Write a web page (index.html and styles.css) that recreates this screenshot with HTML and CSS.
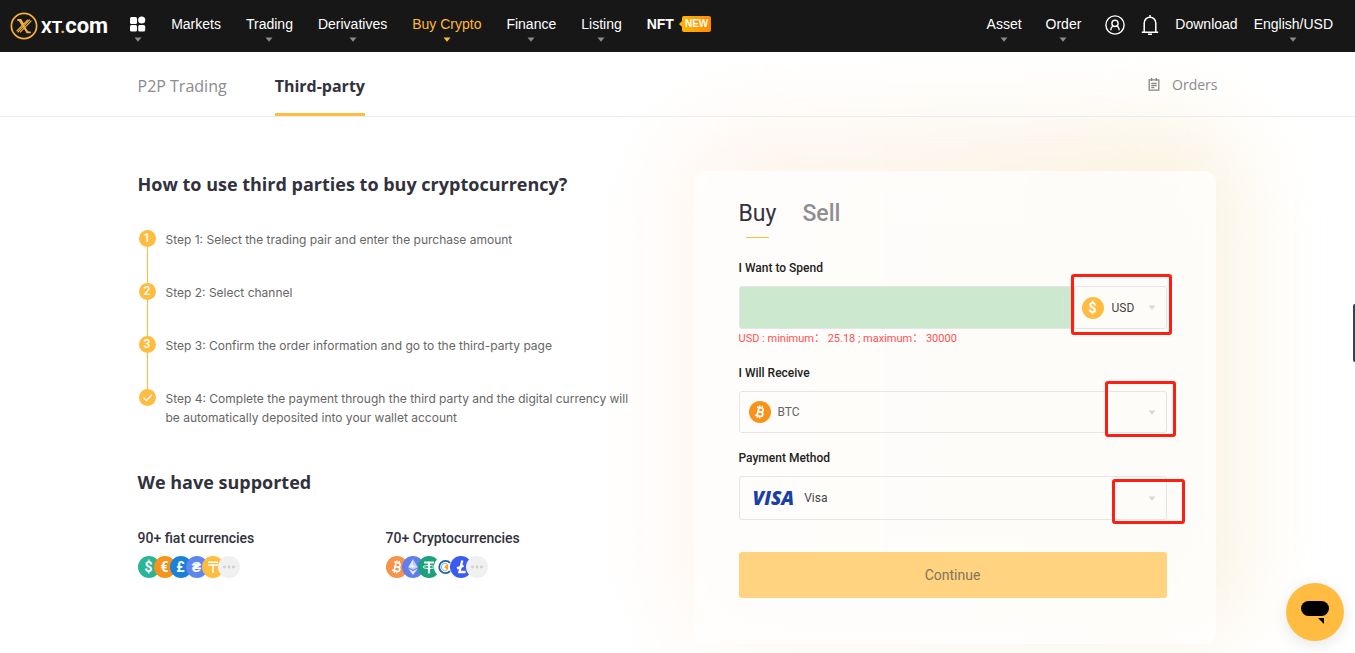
FILE: index.html
```html
<!DOCTYPE html>
<html lang="en">
<head>
<meta charset="utf-8">
<meta name="viewport" content="width=device-width, initial-scale=1">
<title>Buy Crypto | XT.COM</title>
<link rel="stylesheet" href="styles.css">
</head>
<body>
<svg class="defs" aria-hidden="true">
  <symbol id="caret" viewBox="0 0 8 5"><path d="M0.5 0.5h7L4 4.8z" fill="currentColor"/></symbol>
  <symbol id="btc" viewBox="0 0 22 22">
    <g transform="rotate(13 11 11)" fill="none" stroke="#fff" stroke-width="1.7">
      <path d="M9 6.8v8.4M7 6.8h4.6a2 2 0 0 1 0 4.1H9h3.1a2.1 2.1 0 0 1 0 4.3H7"/>
      <path d="M9.6 4.6v2.2M12 4.6v2.2M9.6 15.2v2.2M12 15.2v2.2" stroke-width="1.2"/>
    </g>
  </symbol>
</svg>

<header class="topbar">
  <a class="logo" href="#" aria-label="XT.COM">
    <svg width="28" height="28" viewBox="0 0 28 28" fill="none">
      <circle cx="14" cy="14" r="12.6" stroke="#f5b13a" stroke-width="1.7"/>
      <path d="M7.3 8h3.4l2.6 4.2M20.7 20.3h-3.5l-2.5-4.2" stroke="#f5b13a" stroke-width="1.8"/>
      <path d="M19.8 7.6 7.6 20.4M21.4 8.6 10 20.4M18 7.6 6.6 19.2" stroke="#f5b13a" stroke-width="1.2"/>
      <path d="M9.5 8.5l8.3 12" stroke="#f5b13a" stroke-width="1.8"/>
    </svg>
    <span class="wordmark">XT<i>.</i><b>com</b></span>
  </a>
  <nav class="nav">
    <a class="nav-item apps" href="#" aria-label="Apps">
      <svg width="16" height="16" viewBox="0 0 16 16" fill="#fff"><rect x="0" y="1" width="7" height="7" rx="1.5"/><circle cx="11.7" cy="4" r="3.6"/><rect x="0" y="9" width="7" height="6.5" rx="1.5"/><rect x="8.2" y="9" width="7" height="6.5" rx="1.5"/></svg>
      <svg class="caret"><use href="#caret"/></svg>
    </a>
    <a class="nav-item" href="#">Markets</a>
    <a class="nav-item" href="#">Trading<svg class="caret"><use href="#caret"/></svg></a>
    <a class="nav-item" href="#">Derivatives<svg class="caret"><use href="#caret"/></svg></a>
    <a class="nav-item active" href="#">Buy Crypto<svg class="caret"><use href="#caret"/></svg></a>
    <a class="nav-item" href="#">Finance<svg class="caret"><use href="#caret"/></svg></a>
    <a class="nav-item" href="#">Listing<svg class="caret"><use href="#caret"/></svg></a>
    <a class="nav-item nft" href="#">NFT<span class="new">NEW</span></a>
  </nav>
  <nav class="nav account">
    <a class="nav-item" href="#">Asset<svg class="caret"><use href="#caret"/></svg></a>
    <a class="nav-item" href="#">Order<svg class="caret"><use href="#caret"/></svg></a>
    <button class="icon-button user" aria-label="Account">
      <svg width="20" height="20" viewBox="0 0 20 20" fill="none" stroke="#fff" stroke-width="1.4"><circle cx="10" cy="10" r="9.1"/><circle cx="10" cy="8.4" r="3.1"/><path d="M5.8 15.2c.2-3 1.2-4 3-4.1M14.2 15.2c-.2-3-1.2-4-3-4.1"/></svg>
    </button>
    <button class="icon-button" aria-label="Notifications">
      <svg width="18" height="20" viewBox="0 0 18 20" fill="none" stroke="#fff" stroke-width="1.5"><path d="M3.2 17V8a5.8 5.8 0 0 1 11.6 0v9M.8 17.2h16.4M9 2V0M7 19.2h4"/></svg>
    </button>
    <a class="nav-item" href="#">Download</a>
    <a class="nav-item" href="#">English/USD<svg class="caret"><use href="#caret"/></svg></a>
  </nav>
</header>

<div class="subbar">
  <div class="container subbar-inner">
    <a class="tab" href="#">P2P Trading</a>
    <a class="tab current" href="#">Third-party</a>
    <a class="orders" href="#">
      <svg width="12" height="13" viewBox="0 0 12 13" fill="none" stroke="#858585" stroke-width="1.3"><path d="M1.2 1.8h9.6v10.4H1.2zM3.6 0v3M8.4 0v3M3.3 5.5h5.4M3.3 7.6h5.4M3.3 9.7h3"/></svg>
      Orders
    </a>
  </div>
</div>

<main class="container content">
  <section class="guide">
    <h1>How to use third parties to buy cryptocurrency?</h1>
    <ol class="steps">
      <li><span class="dot">1</span><p>Step 1: Select the trading pair and enter the purchase amount</p></li>
      <li><span class="dot">2</span><p>Step 2: Select channel</p></li>
      <li><span class="dot">3</span><p>Step 3: Confirm the order information and go to the third-party page</p></li>
      <li><span class="dot"><svg width="17" height="17" viewBox="0 0 17 17" fill="none" stroke="#fff" stroke-width="1.3"><path d="M4.5 8.6l3 2.9 5.4-5.7"/></svg></span><p>Step 4: Complete the payment through the third party and the digital currency will<br>be automatically deposited into your wallet account</p></li>
    </ol>
    <h2>We have supported</h2>
    <div class="supported">
      <div>
        <h3>90+ fiat currencies</h3>
        <div class="coins">
          <span class="coin green">$</span><span class="coin orange">€</span><span class="coin blue">£</span><span class="coin sky">₴</span><span class="coin amber"><svg width="22" height="22" viewBox="0 0 22 22" stroke="#fff" stroke-width="1.6"><path d="M6 6.2h10M6 9h10M11 9v8"/></svg></span><span class="coin more"><svg width="22" height="22" viewBox="0 0 22 22" fill="#cfcfcf"><circle cx="6.5" cy="11" r="1.4"/><circle cx="11" cy="11" r="1.4"/><circle cx="15.5" cy="11" r="1.4"/></svg></span>
        </div>
      </div>
      <div>
        <h3>70+ Cryptocurrencies</h3>
        <div class="coins">
          <span class="coin coral"><svg width="22" height="22"><use href="#btc"/></svg></span><span class="coin indigo"><svg width="22" height="22" viewBox="0 0 22 22" fill="#fff"><path d="M11 3v8.6l-4.8-.3z" opacity=".8"/><path d="M11 3l4.8 8.3-4.8.3z" opacity=".6"/><path d="M6.2 12.5L11 15.2l4.8-2.7L11 19z" opacity=".85"/><path d="M6.2 11.3L11 9l4.8 2.3-4.8 2.8z" opacity=".6"/></svg></span><span class="coin tether"><svg width="22" height="22" viewBox="0 0 22 22" fill="none" stroke="#fff"><path d="M6 6.5h10M11 6.5V17.5" stroke-width="2.2"/><ellipse cx="11" cy="11" rx="6" ry="1.5" stroke-width="1"/></svg></span><span class="coin white"><svg width="22" height="22" viewBox="0 0 22 22" fill="none"><path d="M16 6.8a6.2 6.2 0 1 0 0 8.4" stroke="#1c63a8" stroke-width="1.8"/><path d="M14.2 7.6v6.8L10 11z" fill="#f5a623"/><path d="M13 8a3.6 3.6 0 1 0 0 6" stroke="#8bb4dc" stroke-width="1"/></svg></span><span class="coin royal"><svg width="22" height="22" viewBox="0 0 22 22" fill="none" stroke="#fff" stroke-width="2.3"><path d="M12.3 4.5L9.4 16h6.2M7 12.4l6.6-2.6"/></svg></span><span class="coin more"><svg width="22" height="22" viewBox="0 0 22 22" fill="#cfcfcf"><circle cx="6.5" cy="11" r="1.4"/><circle cx="11" cy="11" r="1.4"/><circle cx="15.5" cy="11" r="1.4"/></svg></span>
        </div>
      </div>
    </div>
  </section>

  <form class="card">
    <div class="modes">
      <button type="button" class="mode selected">Buy</button>
      <button type="button" class="mode">Sell</button>
    </div>

    <label class="label" for="spend">I Want to Spend</label>
    <div class="field split">
      <div class="amount"><input id="spend" type="text"></div>
      <div class="currency">
        <span class="token amber">$</span>
        <select aria-label="Currency"><option>USD</option></select>
        <svg class="caret"><use href="#caret"/></svg>
      </div>
      <span class="mark mark-currency"></span>
    </div>
    <p class="error">USD : minimum： 25.18 ; maximum： 30000</p>

    <label class="label" for="receive">I Will Receive</label>
    <div class="field coin-field">
      <span class="token orange"><svg width="22" height="22"><use href="#btc"/></svg></span>
      <select id="receive"><option>BTC</option></select>
      <svg class="caret"><use href="#caret"/></svg>
      <span class="mark mark-coin"></span>
    </div>

    <label class="label" for="method">Payment Method</label>
    <div class="field method-field">
      <span class="visa">VISA</span>
      <select id="method"><option>Visa</option></select>
      <svg class="caret"><use href="#caret"/></svg>
      <span class="mark mark-method"></span>
    </div>

    <button type="submit" class="submit" disabled>Continue</button>
  </form>
</main>

<button class="chat" aria-label="Chat">
  <svg width="30" height="24" viewBox="0 0 30 24"><rect x="1" y="1" width="28" height="15" rx="7.5"/><path d="M18 18h6v6z"/></svg>
</button>
<span class="drawer"></span>
</body>
</html>
```
FILE: styles.css
```css
* { box-sizing: border-box; }
body {
  margin: 0;
  min-height: 100vh;
  overflow-x: hidden;
  background: #fff;
  color: #31323d;
  font-family: Roboto, "Noto Sans CJK SC", sans-serif;
  font-size: 12px;
}
a { color: inherit; text-decoration: none; }
h1, h2, h3, p, ol { margin: 0; padding: 0; }
button, input, select { font: inherit; color: inherit; border: 0; padding: 0; background: none; }
.defs { position: absolute; width: 0; height: 0; }
.caret { display: block; width: 8px; height: 5px; }
.container { width: 100%; max-width: 1080px; margin: 0 auto; }

/* Top bar */
.topbar {
  position: relative;
  z-index: 2;
  display: flex;
  align-items: center;
  height: 52px;
  padding: 0 22px 0 10px;
  background: #171717;
  color: #fff;
  font: 14px/16px "Liberation Sans", Arial, sans-serif;
}
.logo { display: flex; align-items: center; gap: 3px; margin-right: 22px; }
.logo svg { flex: none; }
.wordmark { font: 700 17px/24px Roboto, sans-serif; white-space: nowrap; }
.wordmark i { color: #f5b13a; font-style: normal; }
.wordmark b { font-size: 22px; font-weight: 700; }
.nav { display: flex; align-items: center; gap: 25px; }
.nav-item { position: relative; white-space: nowrap; padding: 16px 0 20px; }
.nav-item .caret { position: absolute; left: 50%; bottom: 10px; margin-left: -4px; color: #8b8b8b; }
.apps svg:first-child { display: block; }
.active, .active .caret { color: #ffb83c; }
.nft { display: flex; align-items: center; gap: 8px; font-weight: 700; }
.new {
  position: relative;
  padding: 0 3px;
  border-radius: 2px;
  background: linear-gradient(90deg, #ffb400, #ff8a00);
  font-size: 10px;
}
.new::before {
  content: "";
  position: absolute;
  left: -3px;
  top: 5px;
  border: solid transparent;
  border-width: 3px 3px 3px 0;
  border-right-color: #ffb400;
}
.account { margin-left: auto; gap: 16px; }
.account .nav-item:nth-child(2) { margin: 0 8px; }
.icon-button { display: flex; padding-bottom: 2px; }

/* Section tabs */
.subbar { position: relative; z-index: 1; border-bottom: 1px solid #ededed; }
.subbar-inner {
  display: flex;
  gap: 48px;
  height: 64px;
  font-family: "Open Sans", "Noto Sans", sans-serif;
}
.tab { padding-top: 22px; font-size: 16px; line-height: 24px; color: #8a8a8f; }
.current { border-bottom: 3px solid #ffbc40; font-weight: 700; color: #31323d; }
.orders { display: flex; align-items: center; gap: 12px; margin-left: auto; font-size: 14px; color: #8a8a8f; }

/* Page body */
.content { display: flex; justify-content: space-between; align-items: flex-start; gap: 40px; }
.guide { flex: 0 1 500px; padding-top: 54px; }
h1, h2 { font: 700 18px/26px "Open Sans", "Noto Sans", sans-serif; }
.steps { list-style: none; margin: 32px 0 28px; }
.steps li { position: relative; display: flex; gap: 10px; min-height: 53px; color: #666; line-height: 19px; }
.steps p { padding-top: 1px; font-family: Inter, Roboto, sans-serif; }
.steps li:not(:last-child)::before {
  content: "";
  position: absolute;
  left: 9px;
  top: 10px;
  bottom: -6px;
  width: 1px;
  background: #ffbc40;
}
.dot {
  position: relative;
  display: flex;
  align-items: center;
  justify-content: center;
  flex: none;
  width: 17px;
  height: 17px;
  margin: 1px 0 0 1px;
  border-radius: 50%;
  background: #ffbc40;
  color: #fff;
  font-weight: 500;
}
.supported { display: flex; margin-top: 32px; }
.supported > div { flex: 0 0 248px; }
h3 { font-size: 14px; font-weight: 500; line-height: 22px; }
.coins { display: flex; margin-top: 7px; }
.coin, .token {
  display: flex;
  align-items: center;
  justify-content: center;
  flex: none;
  width: 22px;
  height: 22px;
  border-radius: 50%;
  color: #fff;
  font-size: 14px;
  font-weight: 700;
}
.coin + .coin { margin-left: -6px; }
.green { background: #2bb596; }
.orange { background: #f7931a; }
.blue { background: #1a80d9; }
.sky { background: #5f86ee; }
.amber { background: #ffbc40; }
.more { background: #f0f0f0; }
.coral { background: #f8934c; }
.indigo { background: #627eea; }
.tether { background: #1ba27a; }
.white { background: #fff; }
.royal { background: #3a5af0; }

/* Order form */
.card {
  position: relative;
  flex: 0 1 522px;
  margin: 54px 2px 9px 0;
  padding: 27px 49px 46px 45px;
  border-radius: 10px;
  background: rgba(255, 255, 255, .75);
}
.card::before {
  content: "";
  position: absolute;
  z-index: -1;
  inset: -48px -24px 0 -24px;
  border-radius: 60px;
  background: linear-gradient(90deg, #fff6f1, #fbf4e8 50%, #faf2de);
  filter: blur(42px);
}
.modes { display: flex; align-items: flex-start; gap: 26px; height: 40px; }
.mode { position: relative; height: 40px; padding-bottom: 8px; font-size: 23px; line-height: 32px; color: #8f8f93; font-weight: 500; }
.selected { color: #31323d; font-weight: 400; }
.selected::after {
  content: "";
  position: absolute;
  left: 7px;
  right: 7px;
  bottom: 0;
  height: 1px;
  background: #ffbc40;
}
.label { display: block; margin-top: 20px; margin-bottom: 8px; line-height: 20px; font-weight: 500; color: #222; }
.field {
  position: relative;
  display: flex;
  align-items: center;
  height: 43px;
  border: 1px solid #e5e5e5;
  border-radius: 3px;
}
.field select { flex: 1; min-width: 0; height: 100%; appearance: none; outline: 0; color: #666; }
.field .caret { flex: none; margin-right: 10px; color: #d8d8d8; }
.amount { position: relative; flex: 1; height: 100%; background: #cce8cf; }
.amount input { width: 100%; height: 100%; outline: 0; padding: 0 20px 0 10px; }
.amount::after {
  content: "";
  position: absolute;
  right: 12px;
  top: 7px;
  bottom: 7px;
  width: 1px;
  background: #dfe3dd;
}
.currency { display: flex; align-items: center; gap: 8px; width: 91px; height: 100%; padding-left: 7px; }
.currency select { color: #444; }
.error { margin-bottom: -5px; font-size: 11px; line-height: 20px; color: #ff5050; }
.coin-field { height: 42px; padding-left: 9px; gap: 7px; }
.coin-field + .label { margin-top: 15px; }
.method-field { height: 44px; padding-left: 13px; gap: 10px; }
.method-field select { color: #444; }
.visa { color: #1a3fa6; font: italic 800 19px/20px "Open Sans", sans-serif; }
.mark { position: absolute; border: 3px solid #ff1e12; border-radius: 3px; pointer-events: none; }
.mark-currency { right: -6px; top: -13px; width: 101px; height: 61px; }
.mark-coin { right: -10px; top: -11px; width: 71px; height: 56px; }
.mark-method { right: -19px; top: 2px; width: 73px; height: 45px; }
.error + .label { margin-top: 19px; }
.submit {
  width: 100%;
  height: 46px;
  margin-top: 32px;
  border-radius: 3px;
  background: #ffd380;
  color: #82745c;
  font-size: 14px;
}

/* Floating controls */
.chat {
  position: fixed;
  z-index: 3;
  right: 11px;
  bottom: 12px;
  display: flex;
  align-items: center;
  justify-content: center;
  width: 58px;
  height: 58px;
  border-radius: 50%;
  background: #ffbc40;
  box-shadow: 0 4px 16px rgba(0, 0, 0, .1);
}
.drawer {
  position: fixed;
  right: 0;
  top: 304px;
  width: 2px;
  height: 58px;
  border-radius: 3px 0 0 3px;
  background: #3c4254;
}
```
